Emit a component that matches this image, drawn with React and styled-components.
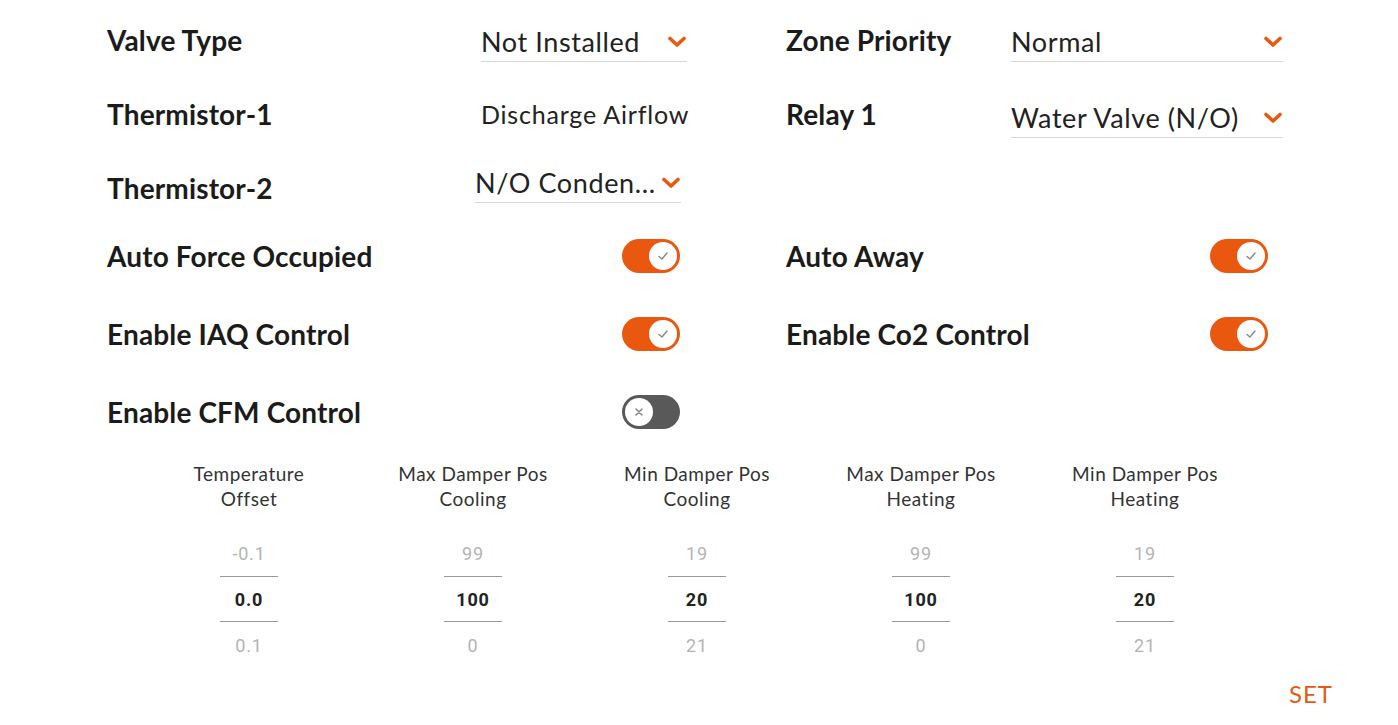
import React from "react";
import styled, { createGlobalStyle } from "styled-components";

const ORANGE = "#ea580f";

const Global = createGlobalStyle`
  html, body { margin: 0; padding: 0; background: #fff; }
  body { font-family: Lato, "Noto Sans", sans-serif; color: #1b1b1b; }
  * { box-sizing: border-box; }
`;

const Page = styled.div`
  width: 1398px;
  height: 725px;
  padding-top: 3px;
  display: flex;
  flex-direction: column;
  overflow: hidden;
`;

const FormGrid = styled.div`
  display: grid;
  padding-left: 107px;
  grid-template-columns: 373px 210px 96px 224px 273px;
  grid-template-rows: 74px 74px 66px 78px 78px 78px;
  align-items: center;
`;

const Label = styled.div`
  font-size: 28px;
  font-weight: 700;
  letter-spacing: 0.15px;
  white-space: nowrap;
  margin-top: ${(p) => p.$nudge || 0}px;
`;

const Select = styled.div`
  height: 40px;
  display: flex;
  align-items: center;
  justify-content: space-between;
  border-bottom: 1px solid #d8d8d8;
  font-size: 27px;
  letter-spacing: 0.6px;
  color: #222;
  white-space: nowrap;
  margin-top: ${(p) => p.$nudge || 0}px;
  margin-left: ${(p) => p.$indent || 0}px;
  margin-right: ${(p) => p.$trim || 0}px;
`;

const StaticValue = styled.div`
  font-size: 25px;
  letter-spacing: 0.8px;
  color: #222;
  white-space: nowrap;
  padding-left: 1px;
`;

const ToggleCell = styled.div`
  display: flex;
  justify-content: flex-end;
  padding-right: ${(p) => p.$pad || 0}px;
`;

const Track = styled.div`
  width: 58px;
  height: 34px;
  border-radius: 17px;
  background: ${(p) => (p.$on ? ORANGE : "#595959")};
  display: flex;
  align-items: center;
  justify-content: ${(p) => (p.$on ? "flex-end" : "flex-start")};
  padding: 0 3px;
`;

const Knob = styled.div`
  width: 28px;
  height: 28px;
  border-radius: 50%;
  background: #fff;
  display: flex;
  align-items: center;
  justify-content: center;
`;

const Pickers = styled.div`
  margin-top: 10px;
  padding-left: 137px;
  display: grid;
  grid-template-columns: repeat(5, 224px);
`;

const PickerCol = styled.div`
  display: flex;
  flex-direction: column;
  align-items: center;
`;

const PickerHead = styled.div`
  font-size: 19px;
  line-height: 25px;
  color: #333;
  text-align: center;
  letter-spacing: 0.5px;
  white-space: nowrap;
  height: 50px;
`;

const Wheel = styled.div`
  margin-top: 19px;
  display: flex;
  flex-direction: column;
  align-items: center;
`;

const WheelItem = styled.div`
  width: 58px;
  height: 46px;
  display: flex;
  align-items: center;
  justify-content: center;
  font-family: Roboto, "Liberation Sans", sans-serif;
  font-size: 18px;
  letter-spacing: 0.8px;
  font-weight: ${(p) => (p.$active ? 700 : 400)};
  color: ${(p) => (p.$active ? "#222" : "#b4b4b4")};
  border-top: ${(p) => (p.$active ? "1px solid #9a9a9a" : "none")};
  border-bottom: ${(p) => (p.$active ? "1px solid #9a9a9a" : "none")};
`;

const Footer = styled.div`
  margin-top: 11px;
  display: flex;
  justify-content: flex-end;
  padding-right: 65px;
`;

const SetButton = styled.button`
  background: none;
  border: none;
  padding: 0;
  font-family: Lato, sans-serif;
  font-size: 24px;
  color: ${ORANGE};
  letter-spacing: 1px;
  cursor: pointer;
`;

const Chevron = () => (
  <svg width="20" height="12" viewBox="0 0 20 12">
    <polyline
      points="3,2.5 10,9 17,2.5"
      fill="none"
      stroke={ORANGE}
      strokeWidth="3.6"
      strokeLinecap="round"
      strokeLinejoin="round"
    />
  </svg>
);

const Toggle = ({ on }) => (
  <Track $on={on}>
    <Knob>
      {on ? (
        <svg width="14" height="14" viewBox="0 0 14 14">
          <polyline points="3,7.5 6,10 11,4" fill="none" stroke="#8a8a8a" strokeWidth="1.5" strokeLinecap="round" />
        </svg>
      ) : (
        <svg width="12" height="12" viewBox="0 0 12 12">
          <path d="M3 3 L9 9 M9 3 L3 9" stroke="#8a8a8a" strokeWidth="1.6" strokeLinecap="round" />
        </svg>
      )}
    </Knob>
  </Track>
);

const pickers = [
  { head: ["Temperature", "Offset"], vals: ["-0.1", "0.0", "0.1"] },
  { head: ["Max Damper Pos", "Cooling"], vals: ["99", "100", "0"] },
  { head: ["Min Damper Pos", "Cooling"], vals: ["19", "20", "21"] },
  { head: ["Max Damper Pos", "Heating"], vals: ["99", "100", "0"] },
  { head: ["Min Damper Pos", "Heating"], vals: ["19", "20", "21"] },
];

const Empty = styled.div``;

export default function App() {
  return (
    <>
      <Global />
      <Page>
        <FormGrid>
          <Label>Valve Type</Label>
          <Select $nudge={4} $indent={1} $trim={3}>
            <span>Not Installed</span>
            <Chevron />
          </Select>
          <Empty />
          <Label>Zone Priority</Label>
          <Select $nudge={4} $indent={1} $trim={0}>
            <span>Normal</span>
            <Chevron />
          </Select>

          <Label>Thermistor-1</Label>
          <StaticValue>Discharge Airflow</StaticValue>
          <Empty />
          <Label>Relay 1</Label>
          <Select $nudge={8} $indent={1} $trim={0}>
            <span>Water Valve (N/O)</span>
            <Chevron />
          </Select>

          <Label $nudge={8}>Thermistor-2</Label>
          <Select $nudge={-2} $indent={-5} $trim={9}>
            <span>N/O Conden...</span>
            <Chevron />
          </Select>
          <Empty />
          <Empty />
          <Empty />

          <Label>Auto Force Occupied</Label>
          <ToggleCell $pad={10}><Toggle on /></ToggleCell>
          <Empty />
          <Label>Auto Away</Label>
          <ToggleCell $pad={15}><Toggle on /></ToggleCell>

          <Label>Enable IAQ Control</Label>
          <ToggleCell $pad={10}><Toggle on /></ToggleCell>
          <Empty />
          <Label>Enable Co2 Control</Label>
          <ToggleCell $pad={15}><Toggle on /></ToggleCell>

          <Label>Enable CFM Control</Label>
          <ToggleCell $pad={10}><Toggle on={false} /></ToggleCell>
          <Empty />
          <Empty />
          <Empty />
        </FormGrid>

        <Pickers>
          {pickers.map((p, i) => (
            <PickerCol key={i}>
              <PickerHead>
                {p.head[0]}
                <br />
                {p.head[1]}
              </PickerHead>
              <Wheel>
                <WheelItem>{p.vals[0]}</WheelItem>
                <WheelItem $active>{p.vals[1]}</WheelItem>
                <WheelItem>{p.vals[2]}</WheelItem>
              </Wheel>
            </PickerCol>
          ))}
        </Pickers>

        <Footer>
          <SetButton>SET</SetButton>
        </Footer>
      </Page>
    </>
  );
}
